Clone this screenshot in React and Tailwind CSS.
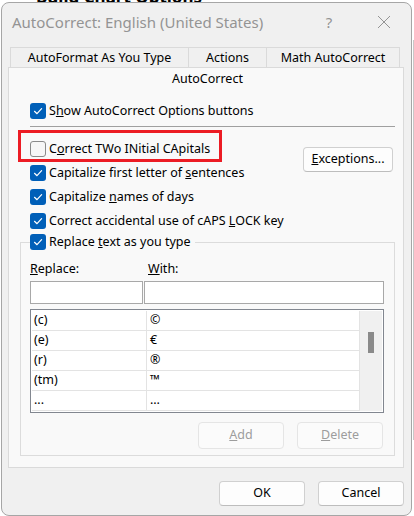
import { useState } from "react";

const font = { fontFamily: '"Segoe UI", "Noto Sans", "Open Sans", sans-serif' };

function Check({ checked }) {
  if (!checked) {
    return (
      <span className="w-[16px] h-[16px] rounded-[3px] border border-[#8a8a8a] bg-[#f6f6f6] shrink-0" />
    );
  }
  return (
    <span className="w-[16px] h-[16px] rounded-[3px] bg-[#005fb8] flex items-center justify-center shrink-0">
      <svg width="12" height="12" viewBox="0 0 12 12" fill="none">
        <path d="M2.5 6.3 L5 8.7 L9.6 3.6" stroke="white" strokeWidth="1.2" strokeLinecap="round" strokeLinejoin="round" />
      </svg>
    </span>
  );
}

function Row({ checked, children }) {
  return (
    <div className="flex items-center gap-[3px] h-[16px]">
      <Check checked={checked} />
      <span className="text-[12.5px] leading-[16px] text-black whitespace-nowrap">{children}</span>
    </div>
  );
}

const entries = [
  ["(c)", "©"],
  ["(e)", "€"],
  ["(r)", "®"],
  ["(tm)", "™"],
  ["...", "…"],
];

export default function App() {
  const [rows] = useState(entries);
  return (
    <div className="relative w-[414px] h-[516px] bg-white overflow-hidden" style={font}>
      <div className="absolute left-[36px] top-[-16px] text-[17px] font-bold text-black whitespace-nowrap">
        Build Chart Options
      </div>
      <div className="absolute right-0 top-[40px] w-[1px] h-[400px] bg-[#c8c8c8]" />

      <div className="absolute left-[1px] top-[2px] w-[411px] h-[514px] rounded-[8px] border border-[#a6a6a6] bg-[#f0f0f0] flex flex-col">
        {/* title bar */}
        <div className="h-[38px] flex items-center pl-[10px] pr-[20px]">
          <span className="text-[15px] text-[#949494] flex-1 whitespace-nowrap">AutoCorrect: English (United States)</span>
          <span className="text-[15px] text-[#949494] w-[20px] text-center mr-[38px]">?</span>
          <svg width="14" height="14" viewBox="0 0 14 14">
            <path d="M1 1 L13 13 M13 1 L1 13" stroke="#949494" strokeWidth="1" />
          </svg>
        </div>

        {/* tabs */}
        <div className="mt-[6px] pl-[6px] pr-[7px] flex flex-col">
          <div className="flex ml-[2px] h-[20px] text-[12.5px] text-black">
            <div className="w-[179px] pt-[2px] border border-b-0 border-[#dadada] bg-[#f0f0f0] flex items-center justify-center">AutoFormat As You Type</div>
            <div className="w-[78px] pt-[2px] border border-l-0 border-b-0 border-[#dadada] bg-[#f0f0f0] flex items-center justify-center">Actions</div>
            <div className="w-[133px] pt-[2px] border border-l-0 border-b-0 border-[#dadada] bg-[#f0f0f0] flex items-center justify-center">Math AutoCorrect</div>
          </div>

          <div className="h-[401px] border border-[#dadada] bg-[#f9f9f9] flex flex-col pl-[11px] pr-[8px]">
            <div className="h-[21px] pt-[1px] flex items-center justify-center text-[12.5px] text-black">AutoCorrect</div>

            <div className="mt-[14px] ml-[10px]">
              <Row checked>S<u>h</u>ow AutoCorrect Options buttons</Row>
            </div>
            <div className="mt-[7px] ml-[10px] h-[1px] bg-[#a0a0a0]" />

            <div className="mt-[14px] flex justify-between">
              <div className="ml-[10px] flex flex-col gap-[8px]">
                <div className="relative">
                  <Row checked={false}>C<u>o</u>rrect TWo INitial CApitals</Row>
                  <div className="absolute left-[-12px] top-[-11px] w-[204px] h-[32px] border-[3px] border-[#ec1c24]" />
                </div>
                <Row checked>Capitalize first letter of <u>s</u>entences</Row>
                <Row checked>Capitalize <u>n</u>ames of days</Row>
                <Row checked>Correct accidental use of cAPS <u>L</u>OCK key</Row>
              </div>
              <button className="mt-[6px] mr-[2px] w-[90px] h-[25px] rounded-[4px] border border-[#d0d0d0] border-b-[#bdbdbd] bg-[#fdfdfd] text-[12.5px] text-black">
                <u>E</u>xceptions...
              </button>
            </div>

            <fieldset className="mt-[5px] border border-[#dcdcdc] pl-[9px] pr-[10px] pb-[6px]">
              <legend className="pr-[4px]">
                <Row checked>Replace <u>t</u>ext as you type</Row>
              </legend>
              <div className="mt-[11px] flex text-[12.5px] leading-[16px] text-black">
                <span className="w-[118px]"><u>R</u>eplace:</span>
                <span><u>W</u>ith:</span>
              </div>
              <div className="mt-[4px] flex gap-[1px]">
                <div className="w-[113px] h-[23px] border border-[#a8a8a8] bg-white" />
                <div className="flex-1 h-[23px] border border-[#a8a8a8] bg-white" />
              </div>
              <div className="mt-[5px] h-[104px] border border-[#828790] bg-white flex p-[1px]">
                <div className="flex-1 flex flex-col">
                  {rows.map(([a, b]) => (
                    <div key={a} className="h-[20px] flex text-[12.5px] text-black">
                      <div className="w-[115px] border-r border-b border-[#e3e3e3] pl-[2px] flex items-center">{a}</div>
                      <div className="flex-1 border-r border-b border-[#e3e3e3] pl-[3px] flex items-center">{b}</div>
                    </div>
                  ))}
                </div>
                <div className="w-[22px] bg-[#f0f0f0] pt-[21px] pl-[8px]">
                  <div className="w-[6px] h-[21px] bg-[#8a8a8a]" />
                </div>
              </div>
              <div className="mt-[9px] flex justify-end gap-[13px] pr-[1px]">
                <button className="w-[86px] h-[27px] rounded-[4px] border border-[#e5e5e5] bg-[#fbfbfb] text-[12.5px] text-[#9d9d9d]">
                  <u>A</u>dd
                </button>
                <button className="w-[86px] h-[27px] rounded-[4px] border border-[#e5e5e5] bg-[#fbfbfb] text-[12.5px] text-[#9d9d9d]">
                  <u>D</u>elete
                </button>
              </div>
            </fieldset>
          </div>
        </div>

        <div className="mt-[13px] mr-[7px] flex justify-end gap-[13px]">
          <button className="w-[86px] h-[25px] rounded-[4px] border border-[#d0d0d0] border-b-[#bdbdbd] bg-[#fdfdfd] text-[12.5px] text-black">OK</button>
          <button className="w-[86px] h-[25px] rounded-[4px] border border-[#d0d0d0] border-b-[#bdbdbd] bg-[#fdfdfd] text-[12.5px] text-black">Cancel</button>
        </div>
      </div>
    </div>
  );
}
